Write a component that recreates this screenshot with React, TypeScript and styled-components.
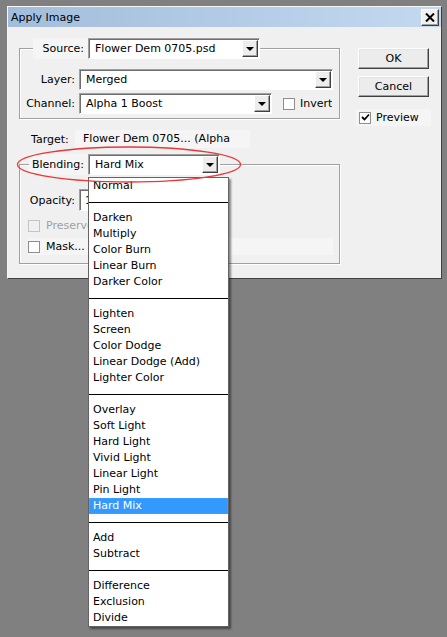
import React from "react";
import styled, { createGlobalStyle } from "styled-components";

const GlobalStyle = createGlobalStyle`
    html, body {
        margin: 0;
        padding: 0;
        background: #808080;
    }
    body {
        font-family: "DejaVu Sans", "Liberation Sans", sans-serif;
        font-size: 11px;
        color: #000;
    }
`;

const blendGroups: string[][] = [
    ["Normal"],
    ["Darken", "Multiply", "Color Burn", "Linear Burn", "Darker Color"],
    ["Lighten", "Screen", "Color Dodge", "Linear Dodge (Add)", "Lighter Color"],
    ["Overlay", "Soft Light", "Hard Light", "Vivid Light", "Linear Light", "Pin Light", "Hard Mix"],
    ["Add", "Subtract"],
    ["Difference", "Exclusion", "Divide"],
];

const Page = styled.div`
    min-height: 637px;
    padding: 6px 0 0 7px;
    box-sizing: border-box;
`;

const Dialog = styled.div`
    position: relative;
    width: 435px;
    height: 273px;
    box-sizing: border-box;
    background: #f0f0f0;
    border: 1px solid;
    border-color: #f6f6f6 #404040 #404040 #f6f6f6;
    display: flex;
    flex-direction: column;
`;

const TitleBar = styled.div`
    height: 20px;
    display: flex;
    align-items: center;
    justify-content: space-between;
    padding: 0 2px 0 3px;
    background: linear-gradient(to right, #a2bddb, #c3d9f0);
`;

const Title = styled.span`
    font-size: 11px;
    color: #000;
`;

const CloseButton = styled.div`
    width: 18px;
    height: 17px;
    box-sizing: border-box;
    display: flex;
    align-items: center;
    justify-content: center;
    background: #f0f0f0;
    border: 1px solid;
    border-color: #fff #404040 #404040 #fff;
    box-shadow: inset -1px -1px 0 #a0a0a0;
`;

const Body = styled.div`
    flex: 1;
    display: flex;
    gap: 18px;
    padding-left: 11px;
`;

const MainColumn = styled.div`
    width: 321px;
    display: flex;
    flex-direction: column;
`;

const SideColumn = styled.div`
    width: 71px;
    padding-top: 21px;
    display: flex;
    flex-direction: column;
`;

const GroupBox = styled.fieldset<{ $top: number; $bottom: number }>`
    margin: ${p => p.$top}px 0 0 0;
    padding: 0 6px ${p => p.$bottom}px 0;
    min-width: 0;
    box-sizing: border-box;
    width: 321px;
    border: 1px solid #a0a0a0;
    box-shadow: inset 1px 1px 0 #fff, 1px 1px 0 #fff;
`;

const Legend = styled.legend<{ $indent: number }>`
    margin-left: ${p => p.$indent}px;
    padding: 0;
    display: flex;
    align-items: center;
`;

const LegendLabel = styled.span<{ $width: number }>`
    width: ${p => p.$width}px;
    height: 21px;
    line-height: 21px;
    box-sizing: border-box;
    padding-right: 4px;
    text-align: right;
    background: #f5f5f5;
`;

const FieldRow = styled.div<{ $top: number }>`
    display: flex;
    align-items: center;
    margin-top: ${p => p.$top}px;
`;

const FieldLabel = styled.span`
    width: 55px;
    flex: none;
    padding-right: 4px;
    text-align: right;
`;

const ComboWrap = styled.div`
    position: relative;
`;

const Combo = styled.div<{ $width: number }>`
    width: ${p => p.$width}px;
    height: 21px;
    box-sizing: border-box;
    display: flex;
    align-items: center;
    background: #fff;
    border: 1px solid;
    border-color: #a0a0a0 #fff #fff #a0a0a0;
    box-shadow: inset 1px 1px 0 #6e6e6e;
`;

const ComboValue = styled.span`
    flex: 1;
    padding-left: 6px;
    white-space: nowrap;
    overflow: hidden;
`;

const ComboButton = styled.span`
    width: 16px;
    height: 17px;
    margin-right: 1px;
    box-sizing: border-box;
    display: flex;
    align-items: center;
    justify-content: center;
    background: #ededed;
    border: 1px solid;
    border-color: #fff #404040 #404040 #fff;
    box-shadow: inset -1px -1px 0 #a0a0a0;
`;

const Arrow = styled.span`
    width: 0;
    height: 0;
    border-left: 4px solid transparent;
    border-right: 4px solid transparent;
    border-top: 4px solid #000;
    margin-top: 1px;
`;

const CheckLine = styled.label<{ $gap: number; $disabled?: boolean; $shade?: boolean }>`
    display: flex;
    align-items: center;
    gap: ${p => p.$gap}px;
    height: 17px;
    color: ${p => (p.$disabled ? "#a0a0a0" : "#000")};
    background: ${p => (p.$shade ? "#f5f5f5" : "transparent")};
    white-space: nowrap;
    overflow: hidden;
`;

const CheckBox = styled.span<{ $disabled?: boolean }>`
    width: 12px;
    height: 12px;
    flex: none;
    box-sizing: border-box;
    display: flex;
    align-items: center;
    justify-content: center;
    background: ${p => (p.$disabled ? "#f0f0f0" : "#fff")};
    border: 1px solid ${p => (p.$disabled ? "#c4c4c4" : "#8e8e8e")};
`;

const PushButton = styled.div<{ $top: number }>`
    width: 71px;
    height: 21px;
    margin-top: ${p => p.$top}px;
    box-sizing: border-box;
    display: flex;
    align-items: center;
    justify-content: center;
    background: #ececec;
    border: 1px solid;
    border-color: #fff #404040 #404040 #fff;
    box-shadow: inset -1px -1px 0 #a0a0a0, inset 1px 1px 0 #e3e3e3;
`;

const PreviewLine = styled(CheckLine)`
    margin: 12px 0 0 -2px;
    padding-left: 3px;
    width: 75px;
    box-sizing: border-box;
`;

const TargetRow = styled.div`
    display: flex;
    align-items: center;
    height: 18px;
    margin-top: 11px;
    padding-left: 12px;
`;

const TargetLabel = styled.span`
    width: 44px;
`;

const TargetValue = styled.span`
    width: 175px;
    height: 18px;
    line-height: 18px;
    box-sizing: border-box;
    padding-left: 8px;
    background: #f5f5f5;
    white-space: nowrap;
`;

const InputBox = styled.div`
    width: 56px;
    height: 22px;
    box-sizing: border-box;
    display: flex;
    align-items: center;
    padding-left: 5px;
    background: #fff;
    border: 1px solid;
    border-color: #a0a0a0 #fff #fff #a0a0a0;
    box-shadow: inset 1px 1px 0 #6e6e6e;
`;

const Unit = styled.span`
    margin-left: 4px;
`;

const CheckRowArea = styled.div<{ $top: number; $width?: number }>`
    margin-top: ${p => p.$top}px;
    padding-left: 8px;
    width: ${p => (p.$width ? `${p.$width}px` : "auto")};
    overflow: hidden;
`;

const ListPopup = styled.div`
    position: absolute;
    top: calc(100% + 2px);
    left: 0;
    width: 141px;
    box-sizing: border-box;
    background: #fff;
    border: 1px solid #646464;
    box-shadow: 2px 2px 2px rgba(0, 0, 0, 0.45);
    z-index: 5;
`;

const ListItem = styled.div<{ $selected?: boolean }>`
    height: 16px;
    line-height: 16px;
    box-sizing: border-box;
    padding-left: 4px;
    white-space: nowrap;
    color: ${p => (p.$selected ? "#fff" : "#000")};
    background: ${p => (p.$selected ? "#3399ff" : "transparent")};
    outline: ${p => (p.$selected ? "1px dotted #c08a4a" : "none")};
    outline-offset: -1px;
`;

const Separator = styled.div`
    height: 16px;
    display: flex;
    align-items: center;
    &::after {
        content: "";
        flex: 1;
        height: 1px;
        background: #000;
    }
`;

const Highlight = styled.svg`
    position: absolute;
    left: 8px;
    top: 139px;
    z-index: 8;
    overflow: visible;
`;

const Check = () => (
    <svg width="9" height="9" viewBox="0 0 9 9">
        <polyline points="1,4 3.5,6.5 8,1.5" fill="none" stroke="#000" strokeWidth="1.8" />
    </svg>
);

const BlendList: React.FC<{ selected: string }> = ({ selected }) => (
    <ListPopup>
        {blendGroups.map((group, gi) => (
            <React.Fragment key={gi}>
                {gi > 0 && <Separator />}
                {group.map(name => (
                    <ListItem key={name} $selected={name === selected}>
                        {name}
                    </ListItem>
                ))}
            </React.Fragment>
        ))}
    </ListPopup>
);

const Dropdown: React.FC<{ width: number; value: string; children?: React.ReactNode }> = ({ width, value, children }) => (
    <ComboWrap>
        <Combo $width={width}>
            <ComboValue>{value}</ComboValue>
            <ComboButton>
                <Arrow />
            </ComboButton>
        </Combo>
        {children}
    </ComboWrap>
);

export default function App() {
    return (
        <Page>
            <GlobalStyle />
            <Dialog>
                <TitleBar>
                    <Title>Apply Image</Title>
                    <CloseButton>
                        <svg width="10" height="9" viewBox="0 0 10 9">
                            <path d="M1 0.5 L9 8.5 M9 0.5 L1 8.5" stroke="#000" strokeWidth="2" />
                        </svg>
                    </CloseButton>
                </TitleBar>
                <Body>
                    <MainColumn>
                        <GroupBox $top={11} $bottom={4}>
                            <Legend $indent={13}>
                                <LegendLabel $width={55}>Source:</LegendLabel>
                                <Dropdown width={172} value="Flower Dem 0705.psd" />
                            </Legend>
                            <FieldRow $top={10}>
                                <FieldLabel>Layer:</FieldLabel>
                                <Dropdown width={254} value="Merged" />
                            </FieldRow>
                            <FieldRow $top={3}>
                                <FieldLabel>Channel:</FieldLabel>
                                <Dropdown width={193} value="Alpha 1 Boost" />
                                <CheckLine $gap={5} style={{ marginLeft: 11 }}>
                                    <CheckBox />
                                    Invert
                                </CheckLine>
                            </FieldRow>
                        </GroupBox>

                        <TargetRow>
                            <TargetLabel>Target:</TargetLabel>
                            <TargetValue>Flower Dem 0705... (Alpha</TargetValue>
                        </TargetRow>

                        <GroupBox $top={6} $bottom={8}>
                            <Legend $indent={9}>
                                <LegendLabel $width={59}>Blending:</LegendLabel>
                                <Dropdown width={132} value="Hard Mix">
                                    <BlendList selected="Hard Mix" />
                                </Dropdown>
                            </Legend>
                            <FieldRow $top={14}>
                                <FieldLabel>Opacity:</FieldLabel>
                                <InputBox>100</InputBox>
                                <Unit>%</Unit>
                            </FieldRow>
                            <CheckRowArea $top={6} $width={68}>
                                <CheckLine $gap={6} $disabled>
                                    <CheckBox $disabled />
                                    Preserve
                                </CheckLine>
                            </CheckRowArea>
                            <CheckRowArea $top={4}>
                                <CheckLine $gap={6} $shade>
                                    <CheckBox />
                                    Mask...
                                </CheckLine>
                            </CheckRowArea>
                        </GroupBox>
                    </MainColumn>

                    <SideColumn>
                        <PushButton $top={0}>OK</PushButton>
                        <PushButton $top={7}>Cancel</PushButton>
                        <PreviewLine $gap={5} $shade>
                            <CheckBox>
                                <Check />
                            </CheckBox>
                            Preview
                        </PreviewLine>
                    </SideColumn>
                </Body>
                <Highlight width="226" height="37" viewBox="0 0 226 37">
                    <ellipse cx="113" cy="18.5" rx="111.5" ry="17.5" fill="none" stroke="#e8383a" strokeWidth="1.3" />
                </Highlight>
            </Dialog>
        </Page>
    );
}
